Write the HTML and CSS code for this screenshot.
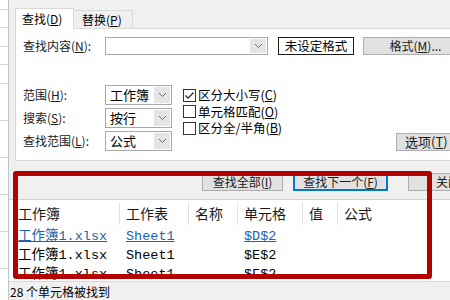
FILE: index.html
```html
<!DOCTYPE html>
<html>
<head>
<meta charset="utf-8">
<link rel="stylesheet" href="styles.css">
</head>
<body>
<div class="screen">
  <div class="sheet"></div>
  <div class="dialog">
    <div class="tabs">
      <div class="tab active">查找(<u>D</u>)</div>
      <div class="tab">替换(<u>P</u>)</div>
    </div>
    <div class="panel">
      <div class="row1">
        <span class="label">查找内容(<u>N</u>):</span>
        <div class="combo wide"><span class="val"></span><span class="arrow"><svg width="9" height="6" viewBox="0 0 9 6"><path d="M1 1 L4.5 4.5 L8 1" fill="none" stroke="#6d6d6d" stroke-width="1"/></svg></span></div>
        <div class="fmtbox">未设定格式</div>
        <div class="btn fmt">格式(<u>M</u>)...</div>
      </div>
      <div class="opts">
        <div class="selects">
          <div class="srow"><span class="label">范围(<u>H</u>):</span><div class="combo"><span class="val">工作簿</span><span class="arrow"><svg width="9" height="6" viewBox="0 0 9 6"><path d="M1 1 L4.5 4.5 L8 1" fill="none" stroke="#6d6d6d" stroke-width="1"/></svg></span></div></div>
          <div class="srow"><span class="label">搜索(<u>S</u>):</span><div class="combo"><span class="val">按行</span><span class="arrow"><svg width="9" height="6" viewBox="0 0 9 6"><path d="M1 1 L4.5 4.5 L8 1" fill="none" stroke="#6d6d6d" stroke-width="1"/></svg></span></div></div>
          <div class="srow"><span class="label">查找范围(<u>L</u>):</span><div class="combo"><span class="val">公式</span><span class="arrow"><svg width="9" height="6" viewBox="0 0 9 6"><path d="M1 1 L4.5 4.5 L8 1" fill="none" stroke="#6d6d6d" stroke-width="1"/></svg></span></div></div>
        </div>
        <div class="checks">
          <div class="chk"><span class="box"><svg width="11" height="11" viewBox="0 0 11 11"><path d="M1.5 5.5 L4.2 8.2 L9.5 2.5" fill="none" stroke="#222" stroke-width="1.2"/></svg></span>区分大小写(<u>C</u>)</div>
          <div class="chk"><span class="box"></span>单元格匹配(<u>O</u>)</div>
          <div class="chk"><span class="box"></span>区分全/半角(<u>B</u>)</div>
        </div>
        <div class="btn opt">选项(<u>T</u>)</div>
      </div>
    </div>
    <div class="actions">
      <div class="btn act1">查找全部(<u>I</u>)</div>
      <div class="btn act2 default">查找下一个(<u>F</u>)</div>
      <div class="btn act3">关闭</div>
    </div>
    <div class="results">
      <div class="grid head">
        <div class="c first">工作簿</div>
        <div class="c">工作表</div>
        <div class="c">名称</div>
        <div class="c">单元格</div>
        <div class="c">值</div>
        <div class="c">公式</div>
      </div>
      <div class="grid row">
        <div class="c first"><a class="lnk">工作簿1.xlsx</a></div>
        <div class="c"><a class="lnk">Sheet1</a></div>
        <div class="c"></div>
        <div class="c"><a class="lnk">$D$2</a></div>
        <div class="c"></div>
        <div class="c"></div>
      </div>
      <div class="grid row">
        <div class="c first">工作簿1.xlsx</div>
        <div class="c">Sheet1</div>
        <div class="c"></div>
        <div class="c">$E$2</div>
        <div class="c"></div>
        <div class="c"></div>
      </div>
      <div class="grid row">
        <div class="c first">工作簿1.xlsx</div>
        <div class="c">Sheet1</div>
        <div class="c"></div>
        <div class="c">$F$2</div>
        <div class="c"></div>
        <div class="c"></div>
      </div>
    </div>
    <div class="status">28 个单元格被找到</div>
  </div>
  <div class="highlight"></div>
</div>
</body>
</html>
```

FILE: styles.css
```css
* { box-sizing: border-box; }
html, body { margin: 0; padding: 0; }
body {
  width: 450px;
  height: 300px;
  overflow: hidden;
  background: #ffffff;
  font-family: "Noto Sans CJK SC", "Microsoft YaHei", sans-serif;
  font-size: 12px;
  color: #000;
}
u { text-decoration: underline; text-underline-offset: 1px; }

.screen {
  position: relative;
  display: flex;
  width: 450px;
  height: 300px;
  overflow: hidden;
}

.sheet {
  width: 9px;
  flex: none;
  border-right: 1px solid #b9c4cf;
  background: #ffffff repeating-linear-gradient(to bottom, transparent 0, transparent 9px, #d8d8d8 9px, #d8d8d8 10px, transparent 10px, transparent 18.5px);
}

.dialog {
  flex: 1;
  min-width: 0;
  display: flex;
  flex-direction: column;
  background: #f0f0f0;
  overflow: hidden;
}

/* tabs */
.tabs {
  display: flex;
  align-items: flex-end;
  padding: 8px 0 0 6px;
  height: 29px;
}
.tab {
  height: 18px;
  line-height: 17px;
  padding: 0 8px;
  width: 60px;
  border: 1px solid #d9d9d9;
  border-bottom: none;
  background: #f0f0f0;
  margin-bottom: 1px;
  margin-left: -1px;
}
.tab.active {
  position: relative;
  z-index: 1;
  height: 21px;
  line-height: 20px;
  width: 59px;
  background: #ffffff;
  margin-bottom: 0;
  margin-left: 0;
  padding-left: 6px;
}

/* panel */
.panel {
  margin-left: 6px;
  margin-top: -1px;
  width: 460px;
  height: 133px;
  flex: none;
  background: #ffffff;
  border: 1px solid #d9d9d9;
  padding: 8px 0 0 7px;
}
.row1 {
  display: flex;
  align-items: center;
  height: 18px;
}
.label {
  width: 82px;
  flex: none;
  white-space: nowrap;
  line-height: 18px;
  color: #1a1a1a;
}
.combo {
  display: flex;
  width: 67px;
  height: 20px;
  border: 1px solid #a9a9a9;
  background: #fff;
  flex: none;
}
.combo.wide { width: 163px; height: 18px; }
.combo .val {
  flex: 1;
  padding-left: 4px;
  line-height: 18px;
  font-size: 13px;
}
.combo .arrow {
  width: 16px;
  flex: none;
  margin: 1px;
  background: #e5e5e5;
  display: flex;
  align-items: center;
  justify-content: center;
}
.fmtbox {
  margin-left: 10px;
  width: 76px;
  height: 18px;
  flex: none;
  border: 1px solid #1a1a1a;
  background: #fff;
  text-align: center;
  line-height: 16px;
  font-size: 12.5px;
}
.btn {
  flex: none;
  height: 18px;
  background: #e1e1e1;
  border: 1px solid #adadad;
  text-align: center;
  line-height: 16px;
  white-space: nowrap;
  color: #1a1a1a;
}
.btn.fmt { margin-left: 9px; width: 105px; }

.opts {
  display: flex;
  margin-top: 30px;
}
.selects {
  display: flex;
  flex-direction: column;
  gap: 3px;
}
.srow {
  display: flex;
  align-items: center;
  height: 20px;
}
.checks {
  margin-left: 11px;
  width: 213px;
  padding-top: 2px;
  flex: none;
}
.chk {
  display: flex;
  align-items: center;
  height: 16.5px;
  line-height: 16px;
  white-space: nowrap;
  font-size: 12.5px;
}
.box {
  width: 13px;
  height: 13px;
  border: 1px solid #333;
  background: #fff;
  margin-right: 2px;
  display: flex;
  align-items: center;
  justify-content: center;
  flex: none;
}
.btn.opt {
  align-self: flex-end;
  width: 80px;
  text-align: left;
  padding-left: 8px;
  font-size: 13px;
}

/* actions */
.actions {
  display: flex;
  margin-top: 12px;
  padding-left: 193px;
  height: 18px;
}
.act1 { width: 81px; }
.act2 { width: 95px; margin-left: 10px; }
.act3 { width: 80px; margin-left: 20px; }
.btn.default {
  border-color: #0078d7;
  box-shadow: inset 0 0 0 1px #0078d7;
}

/* results */
.results {
  margin-top: 8px;
  height: 82px;
  flex: none;
  background: #ffffff;
  border-top: 1px solid #d0d0d0;
  overflow: hidden;
  font-size: 14px;
}
.grid {
  display: grid;
  grid-template-columns: 110px 69px 49px 65px 35px 1fr;
}
.head {
  height: 27px;
  align-items: center;
}
.head .c {
  height: 23px;
  line-height: 23px;
  border-left: 1px solid #e3e3e3;
  padding-left: 6px;
  color: #1a1a1a;
}
.head .c.first { border-left: none; padding-left: 9px; }
.row { height: 19px; }
.row .c {
  line-height: 19px;
  padding-left: 7px;
  white-space: nowrap;
  font-family: "Liberation Mono", "Noto Sans CJK SC", monospace;
  font-size: 13.5px;
}
.row .c.first { padding-left: 9px; }
.lnk {
  color: #1e62a8;
  text-decoration: underline;
}

/* status */
.status {
  flex: 1;
  border-top: 1px solid #d9d9d9;
  padding-left: 1px;
  line-height: 19px;
  font-size: 12px;
  background: #f0f0f0;
}

/* annotation overlay */
.highlight {
  position: absolute;
  left: 13px;
  top: 171px;
  width: 419px;
  height: 108px;
  border: 5px solid #b30000;
  border-radius: 3px;
}
```
